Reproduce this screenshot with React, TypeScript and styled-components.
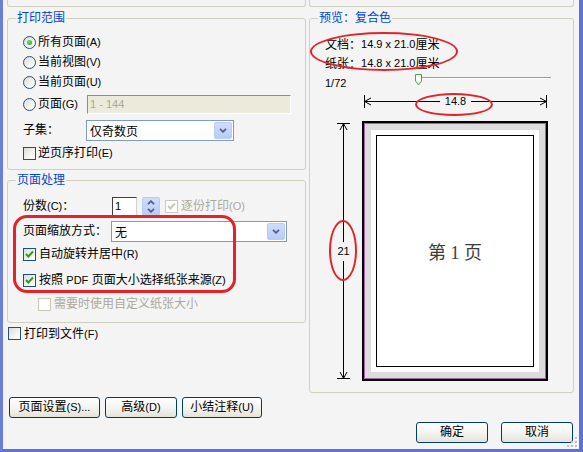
import React from "react";
import styled, { createGlobalStyle } from "styled-components";

const Global = createGlobalStyle`
  html, body { margin: 0; padding: 0; background: #f4f4f4; }
  body {
    font-family: "Liberation Sans", "Noto Sans CJK SC", sans-serif;
    font-size: 12px;
    color: #000;
  }
  * { box-sizing: border-box; }
`;

const Window = styled.div`
  position: relative;
  width: 583px;
  height: 452px;
  background: #f4f4f4;
  border-left: 3px solid #6b7fd9;
  border-right: 4px solid #5f73d5;
  border-bottom: 3px solid #5f73d5;
  display: flex;
  align-items: flex-start;
  padding-left: 4px;
  gap: 3px;
  overflow: hidden;
`;

const Column = styled.div<{ $w: number }>`
  width: ${(p) => p.$w}px;
  flex: none;
  display: flex;
  flex-direction: column;
`;

const Tail = styled.div`
  height: 7px;
  border: 1px solid #d0d0bf;
  border-top: none;
  border-radius: 0 0 3px 3px;
`;

const Group = styled.div<{ $mt: number }>`
  position: relative;
  margin-top: ${(p) => p.$mt}px;
  border: 1px solid #d0d0bf;
  border-radius: 3px;
  display: flex;
  flex-direction: column;
`;

const Title = styled.div`
  align-self: flex-start;
  margin: -7px 0 0 8px;
  padding: 0 1px;
  height: 13px;
  line-height: 13px;
  background: #f4f4f4;
  color: #0046d5;
  white-space: nowrap;
`;

const Body = styled.div<{ $pt: number; $pb: number; $pl: number }>`
  display: flex;
  flex-direction: column;
  padding: ${(p) => p.$pt}px 0 ${(p) => p.$pb}px ${(p) => p.$pl}px;
`;

const Row = styled.div<{ $h: number; $mt?: number; $pl?: number }>`
  display: flex;
  align-items: center;
  height: ${(p) => p.$h}px;
  margin-top: ${(p) => p.$mt ?? 0}px;
  padding-left: ${(p) => p.$pl ?? 0}px;
  white-space: nowrap;
`;

const Lat = styled.span`
  font-size: 11px;
`;

const Label = styled.span<{ $ml?: number; $dis?: boolean }>`
  margin-left: ${(p) => p.$ml ?? 0}px;
  line-height: 14px;
  color: ${(p) => (p.$dis ? "#aca899" : "#000")};
`;

const Lead = styled.div<{ $w: number }>`
  width: ${(p) => p.$w}px;
  flex: none;
  display: flex;
  align-items: center;
`;

const Radio = styled.span<{ $on?: boolean }>`
  position: relative;
  flex: none;
  width: 13px;
  height: 13px;
  border-radius: 50%;
  border: 1px solid #1c5180;
  background: linear-gradient(135deg, #dcdcd7 0%, #f4f4f0 60%, #ffffff 100%);
  &::after {
    content: "";
    display: ${(p) => (p.$on ? "block" : "none")};
    position: absolute;
    left: 3px;
    top: 3px;
    width: 5px;
    height: 5px;
    border-radius: 50%;
    background: radial-gradient(circle at 40% 40%, #6ee06e, #21a121);
  }
`;

const Box = styled.span<{ $dis?: boolean }>`
  flex: none;
  width: 13px;
  height: 13px;
  border: 1px solid ${(p) => (p.$dis ? "#cac8bb" : "#1c5180")};
  background: ${(p) =>
    p.$dis ? "#ffffff" : "linear-gradient(135deg, #dcdcd7 0%, #f4f4f0 60%, #ffffff 100%)"};
  display: flex;
  align-items: center;
  justify-content: center;
`;

const DisabledInput = styled.div`
  width: 204px;
  height: 19px;
  background: #ebeadb;
  border: 1px solid;
  border-color: #8f8d84 #ffffff #ffffff #8f8d84;
  color: #aca899;
  font-size: 11px;
  line-height: 17px;
  padding-left: 2px;
`;

const Select = styled.div<{ $w: number }>`
  width: ${(p) => p.$w}px;
  height: 21px;
  flex: none;
  border: 1px solid #7f9db9;
  background: #fff;
  display: flex;
  align-items: center;
  justify-content: space-between;
  padding: 0 1px 0 3px;
`;

const DropBtn = styled.span`
  width: 18px;
  height: 17px;
  border: 1px solid #bccbf2;
  border-radius: 2px;
  background: linear-gradient(180deg, #cfdcfd 0%, #b8cbf8 100%);
  display: flex;
  align-items: center;
  justify-content: center;
`;

const NumInput = styled.div`
  width: 25px;
  height: 19px;
  flex: none;
  background: #fff;
  border: 1px solid;
  border-color: #3f3f3f #cfcfcf #cfcfcf #3f3f3f;
  font-size: 11px;
  line-height: 17px;
  padding-left: 2px;
`;

const Spin = styled.span`
  margin-left: 5px;
  width: 18px;
  height: 19px;
  flex: none;
  border: 1px solid #bccbf2;
  border-radius: 2px;
  background: linear-gradient(180deg, #cfdcfd 0%, #b8cbf8 100%);
  display: flex;
  flex-direction: column;
  align-items: center;
  justify-content: center;
  gap: 3px;
`;

const Spacer = styled.span<{ $w: number }>`
  width: ${(p) => p.$w}px;
  flex: none;
`;

const BtnRow = styled.div<{ $mt: number; $end?: boolean }>`
  display: flex;
  gap: 5px;
  margin-top: ${(p) => p.$mt}px;
  padding-left: ${(p) => (p.$end ? 0 : 2)}px;
  padding-right: ${(p) => (p.$end ? 1 : 0)}px;
  justify-content: ${(p) => (p.$end ? "flex-end" : "flex-start")};
  ${(p) => (p.$end ? "gap: 13px;" : "")}
`;

const Button = styled.button<{ $w: number }>`
  width: ${(p) => p.$w}px;
  height: 21px;
  padding: 0;
  border: 1px solid #003c74;
  border-radius: 3px;
  background: linear-gradient(180deg, #ffffff 0%, #f3f3ef 55%, #e5e2d9 100%);
  font: inherit;
  color: #000;
  white-space: nowrap;
  line-height: 19px;
`;

const InfoLine = styled.div`
  height: 19px;
  display: flex;
  align-items: center;
  white-space: nowrap;
`;

const SliderRow = styled.div`
  height: 16px;
  display: flex;
  align-items: flex-start;
`;

const SliderLabel = styled.span`
  width: 89px;
  flex: none;
  margin-top: 5px;
  line-height: 13px;
  font-size: 11px;
`;

const SliderSvg = styled.svg`
  margin-top: 2px;
  flex: none;
`;

const HDim = styled.div`
  margin: 7px 0 0 39px;
  width: 183px;
  height: 13px;
  display: flex;
  align-items: center;
`;

const HLine = styled.span`
  flex: 1;
  height: 1px;
  background: #000;
`;

const DimText = styled.span<{ $v?: boolean }>`
  font-size: 11px;
  line-height: 13px;
  padding: ${(p) => (p.$v ? "3px 0" : "0 5px")};
`;

const PageArea = styled.div`
  margin: 13px 0 0 12px;
  height: 260px;
  display: flex;
  gap: 12px;
`;

const VDim = styled.div`
  width: 13px;
  margin-top: 2px;
  height: 256px;
  display: flex;
  flex-direction: column;
  align-items: center;
`;

const VLine = styled.span`
  flex: 1;
  width: 1px;
  background: #000;
`;

const Sheet = styled.div`
  width: 186px;
  height: 260px;
  border: 2px solid #000;
  display: flex;
`;

const Paper = styled.div`
  flex: 1;
  border: 1px solid #a860a8;
  background: #dcdcdc;
  padding: 6px;
  display: flex;
`;

const Printable = styled.div`
  flex: 1;
  background: #fff;
  padding: 5px;
  display: flex;
`;

const ContentBox = styled.div`
  flex: 1;
  border: 1px solid #000;
  display: flex;
  align-items: center;
  justify-content: center;
`;

const PageLabel = styled.span`
  font-family: "Liberation Serif", "Noto Sans CJK SC", serif;
  font-size: 18px;
  color: #3c3c3c;
  white-space: pre;
`;

const RedBox = styled.div`
  position: absolute;
  left: 5px;
  top: 34px;
  width: 223px;
  height: 78px;
  border: 3px solid #e3232a;
  border-radius: 14px;
  pointer-events: none;
`;

const Ellipse = styled.div<{ $x: number; $y: number; $w: number; $h: number }>`
  position: absolute;
  left: ${(p) => p.$x}px;
  top: ${(p) => p.$y}px;
  width: ${(p) => p.$w}px;
  height: ${(p) => p.$h}px;
  border: 2.5px solid #e3232a;
  border-radius: 50%;
  pointer-events: none;
`;

const Grip = styled.svg`
  position: absolute;
  right: 0;
  bottom: 0;
`;

const Check = ({ c }: { c: string }) => (
  <svg width="11" height="11" viewBox="0 0 11 11">
    <path d="M2 5 L4.3 7.5 L9 2.5" fill="none" stroke={c} strokeWidth="2" />
  </svg>
);

const Chevron = ({ up }: { up?: boolean }) => (
  <svg width="8" height="5" viewBox="0 0 8 5">
    <path
      d={up ? "M1 4.2 L4 1.2 L7 4.2" : "M1 0.8 L4 3.8 L7 0.8"}
      fill="none"
      stroke="#4d6185"
      strokeWidth="1.8"
    />
  </svg>
);

const HEnd = ({ right }: { right?: boolean }) => (
  <svg width="8" height="13" viewBox="0 0 8 13" style={{ flex: "none" }}>
    {right ? (
      <path d="M7.5 0 V13 M0 6.5 H7.5 M7.5 6.5 L1 3 M7.5 6.5 L1 10" stroke="#000" strokeWidth="1" fill="none" />
    ) : (
      <path d="M0.5 0 V13 M0.5 6.5 H8 M0.5 6.5 L7 3 M0.5 6.5 L7 10" stroke="#000" strokeWidth="1" fill="none" />
    )}
  </svg>
);

const VEnd = ({ bottom }: { bottom?: boolean }) => (
  <svg width="13" height="8" viewBox="0 0 13 8" style={{ flex: "none" }}>
    {bottom ? (
      <path d="M0 7.5 H13 M6.5 0 V7.5 M6.5 7.5 L3 1 M6.5 7.5 L10 1" stroke="#000" strokeWidth="1" fill="none" />
    ) : (
      <path d="M0 0.5 H13 M6.5 0.5 V8 M6.5 0.5 L3 7 M6.5 0.5 L10 7" stroke="#000" strokeWidth="1" fill="none" />
    )}
  </svg>
);

export default function App() {
  return (
    <>
      <Global />
      <Window>
        <Column $w={299}>
          <Tail />
          <Group $mt={11}>
            <Title>打印范围</Title>
            <Body $pt={7} $pb={6} $pl={15}>
              <Row $h={20}>
                <Radio $on />
                <Label $ml={2}>所有页面<Lat>(A)</Lat></Label>
              </Row>
              <Row $h={20}>
                <Radio />
                <Label $ml={2}>当前视图<Lat>(V)</Lat></Label>
              </Row>
              <Row $h={20}>
                <Radio />
                <Label $ml={2}>当前页面<Lat>(U)</Lat></Label>
              </Row>
              <Row $h={22} $mt={1}>
                <Lead $w={64}>
                  <Radio />
                  <Label $ml={2}>页面<Lat>(G)</Lat></Label>
                </Lead>
                <DisabledInput>1 - 144</DisabledInput>
              </Row>
              <Row $h={22} $mt={4}>
                <Lead $w={63}>
                  <Label>子集：</Label>
                </Lead>
                <Select $w={148}>
                  <span>仅奇数页</span>
                  <DropBtn><Chevron /></DropBtn>
                </Select>
              </Row>
              <Row $h={20} $mt={2}>
                <Box />
                <Label $ml={2}>逆页序打印<Lat>(E)</Lat></Label>
              </Row>
            </Body>
          </Group>

          <Group $mt={10}>
            <Title>页面处理</Title>
            <Body $pt={9} $pb={8} $pl={15}>
              <Row $h={20}>
                <Lead $w={89}>
                  <Label>份数<Lat>(C)</Lat>：</Label>
                </Lead>
                <NumInput>1</NumInput>
                <Spin>
                  <Chevron up />
                  <Chevron />
                </Spin>
                <Spacer $w={5} />
                <Box $dis><Check c="#cac8bb" /></Box>
                <Label $ml={3} $dis>逐份打印<Lat>(O)</Lat></Label>
              </Row>
              <Row $h={22} $mt={4}>
                <Lead $w={88}>
                  <Label>页面缩放方式：</Label>
                </Lead>
                <Select $w={176}>
                  <span>无</span>
                  <DropBtn><Chevron /></DropBtn>
                </Select>
              </Row>
              <Row $h={20} $mt={2}>
                <Box><Check c="#21a121" /></Box>
                <Label $ml={3}>自动旋转并居中<Lat>(R)</Lat></Label>
              </Row>
              <Row $h={20} $mt={6}>
                <Box><Check c="#21a121" /></Box>
                <Label $ml={3}>按照 <Lat>PDF</Lat> 页面大小选择纸张来源<Lat>(Z)</Lat></Label>
              </Row>
              <Row $h={20} $mt={4} $pl={15}>
                <Box $dis />
                <Label $ml={3} $dis>需要时使用自定义纸张大小</Label>
              </Row>
            </Body>
            <RedBox />
          </Group>

          <Row $h={13} $mt={4} $pl={1}>
            <Box />
            <Label $ml={3}>打印到文件<Lat>(F)</Lat></Label>
          </Row>

          <BtnRow $mt={57}>
            <Button $w={91}>页面设置<Lat>(S)...</Lat></Button>
            <Button $w={72}>高级<Lat>(D)</Lat></Button>
            <Button $w={80}>小结注释<Lat>(U)</Lat></Button>
          </BtnRow>
        </Column>

        <Column $w={265}>
          <Tail />
          <Group $mt={11}>
            <Title>预览：复合色</Title>
            <Body $pt={9} $pb={11} $pl={15}>
              <InfoLine>文档：<Lat> 14.9 x 21.0</Lat>厘米</InfoLine>
              <InfoLine>纸张：<Lat> 14.8 x 21.0</Lat>厘米</InfoLine>
              <SliderRow>
                <SliderLabel>1/72</SliderLabel>
                <SliderSvg width="137" height="13" viewBox="0 0 137 13">
                  <rect x="8" y="3" width="129" height="1" fill="#9a9a9a" />
                  <rect x="8" y="4" width="129" height="1" fill="#ffffff" />
                  <path
                    d="M1.5 0.5 H7.5 V7 L4.5 11 L1.5 7 Z"
                    fill="#ffffff"
                    stroke="#4aa84a"
                    strokeWidth="1"
                  />
                  <path d="M2.5 7.5 L4.5 10 L6.5 7.5" fill="none" stroke="#8fcf8f" strokeWidth="0.8" />
                </SliderSvg>
              </SliderRow>
              <HDim>
                <HEnd />
                <HLine />
                <DimText>14.8</DimText>
                <HLine />
                <HEnd right />
              </HDim>
              <PageArea>
                <VDim>
                  <VEnd />
                  <VLine />
                  <DimText $v>21</DimText>
                  <VLine />
                  <VEnd bottom />
                </VDim>
                <Sheet>
                  <Paper>
                    <Printable>
                      <ContentBox>
                        <PageLabel>第 1 页</PageLabel>
                      </ContentBox>
                    </Printable>
                  </Paper>
                </Sheet>
              </PageArea>
            </Body>
            <Ellipse $x={0} $y={13} $w={148} $h={39} />
            <Ellipse $x={105} $y={74} $w={78} $h={23} />
            <Ellipse $x={19} $y={201} $w={28} $h={61} />
          </Group>
          <BtnRow $mt={29} $end>
            <Button $w={72}>确定</Button>
            <Button $w={72}>取消</Button>
          </BtnRow>
        </Column>

        <Grip width="12" height="12" viewBox="0 0 12 12">
          {[
            [8, 0],
            [4, 4],
            [8, 4],
            [0, 8],
            [4, 8],
            [8, 8],
          ].map(([x, y], i) => (
            <g key={i}>
              <rect x={x + 1} y={y + 1} width="2" height="2" fill="#ffffff" />
              <rect x={x} y={y} width="2" height="2" fill="#c3c1b6" />
            </g>
          ))}
        </Grip>
      </Window>
    </>
  );
}
